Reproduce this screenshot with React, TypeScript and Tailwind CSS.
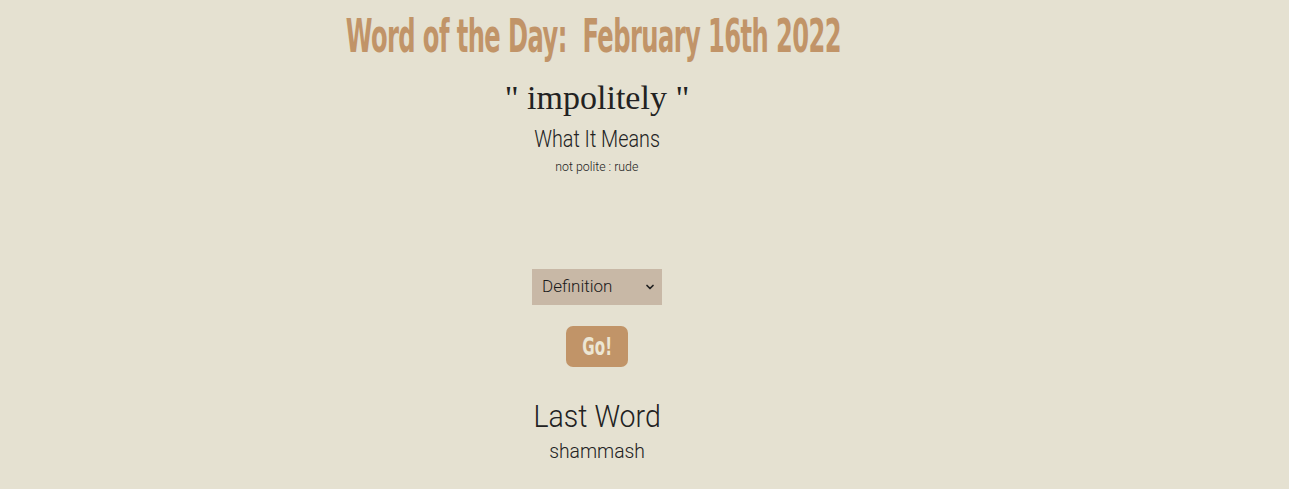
import { ChevronDown } from "lucide-react"

const condensed = { fontFamily: '"DejaVu Sans Condensed", "Liberation Sans Narrow", sans-serif' }

export default function App() {
  return (
    <div className="min-h-[489px] w-full bg-[#e5e1d1] text-[#222222]">
      <div className="flex w-[1194px] flex-col items-center pt-[10px]">
        <h1
          className="mr-[8px] origin-center scale-x-[0.585] whitespace-pre text-[46px] font-bold leading-[52px] tracking-[-1px] text-[#c19468]"
          style={condensed}
        >
          {"Word of the Day:  February 16th 2022"}
        </h1>
        <p className="mt-[16px] font-['Liberation_Serif',serif] text-[34px] leading-[40px]">" impolitely "</p>
        <h2 className="mt-[8px] scale-x-[0.86] font-['Roboto',sans-serif] text-[23px] font-light leading-[28px]">What It Means</h2>
        <p className="mt-[5px] scale-x-[0.95] font-['Roboto',sans-serif] text-[13px] font-light leading-[16px]">not polite : rude</p>

        <div className="relative mt-[94px] h-[36px] w-[130px] bg-[#c8b8a6]">
          <select className="h-full w-full appearance-none bg-transparent pl-[10px] font-['Roboto',sans-serif] text-[17px] font-light text-[#1a1a1a] outline-none">
            <option>Definition</option>
            <option>Example</option>
            <option>Synonyms</option>
          </select>
          <ChevronDown className="pointer-events-none absolute right-[6px] top-[12px] h-3 w-3" strokeWidth={3.5} />
        </div>

        <button
          className="mt-[21px] h-[41px] w-[62px] rounded-[7px] bg-[#c19468] text-[24px] font-bold text-[#ece6d4]"
          style={condensed}
        >
          <span className="inline-block scale-x-[0.7]">Go!</span>
        </button>

        <h2 className="mt-[32px] scale-x-[0.92] font-['Roboto',sans-serif] text-[31px] font-light leading-[36px]">Last Word</h2>
        <p className="mt-[3px] scale-x-[0.92] font-['Roboto',sans-serif] text-[21px] font-light leading-[26px]">shammash</p>
      </div>
    </div>
  )
}
